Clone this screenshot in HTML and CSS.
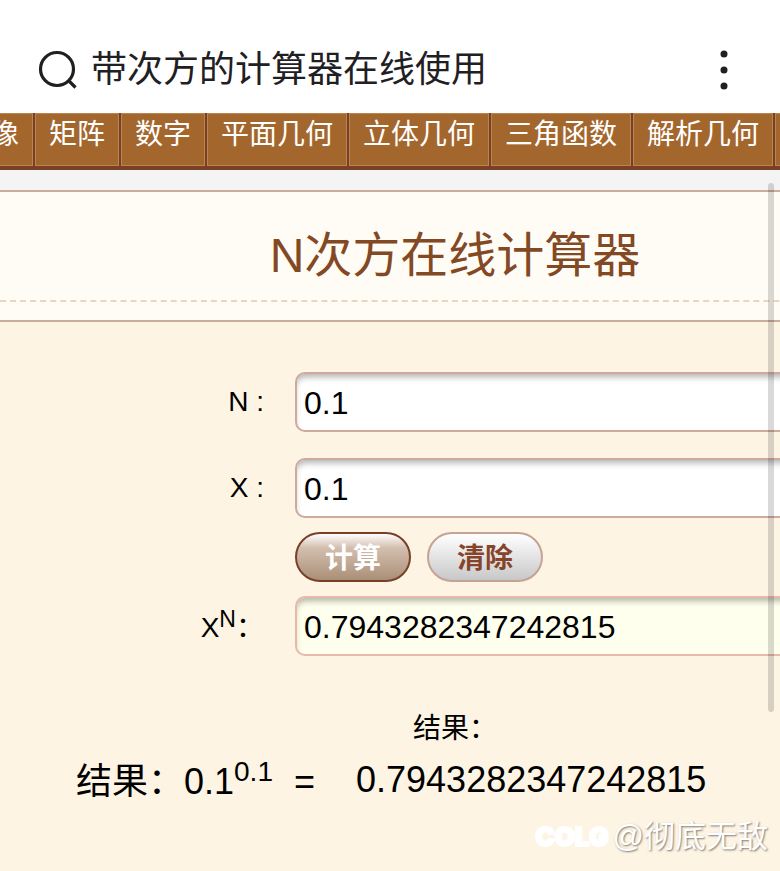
FILE: index.html
```html
<!DOCTYPE html>
<html lang="zh-CN">
<head>
    <meta charset="UTF-8">
    <meta name="viewport" content="width=device-width, initial-scale=1.0">
    <title>N次方在线计算器</title>
    <link rel="stylesheet" href="styles.css">
</head>
<body>
    <header class="search-bar">
        <svg class="search-icon" viewBox="0 0 40 40" fill="none" stroke="#1f2023" stroke-width="3.200">
            <circle cx="19" cy="19" r="16.5"/>
            <path d="M30 30l7.500 7.500"/>
        </svg>
        <span class="search-text">带次方的计算器在线使用</span>
        <button class="menu-button" type="button" aria-label="菜单">
            <svg viewBox="0 0 8 40" fill="#1f2023">
                <circle cx="4" cy="4" r="3.5"/>
                <circle cx="4" cy="20" r="3.5"/>
                <circle cx="4" cy="36" r="3.5"/>
            </svg>
        </button>
    </header>

    <nav class="nav">
        <a href="#">像</a>
        <a href="#">矩阵</a>
        <a href="#">数字</a>
        <a href="#">平面几何</a>
        <a href="#">立体几何</a>
        <a href="#">三角函数</a>
        <a href="#">解析几何</a>
        <a href="#" aria-label="更多"></a>
    </nav>

    <main class="page">
        <div class="title-box">
            <h1>N次方在线计算器</h1>
        </div>

        <form class="calc">
            <div class="row">
                <label for="n">N :</label>
                <input id="n" type="text" value="0.1">
            </div>
            <div class="row">
                <label for="x">X :</label>
                <input id="x" type="text" value="0.1">
            </div>
            <div class="buttons">
                <button class="btn btn-primary" type="button">计算</button>
                <button class="btn" type="reset">清除</button>
            </div>
            <div class="row">
                <label for="result">X<sup>N</sup>：</label>
                <input id="result" class="result" type="text" value="0.7943282347242815" readonly>
            </div>
        </form>

        <p class="result-title">结果：</p>
        <div class="result-line">
            <span>结果：0.1<sup>0.1</sup><span class="equals">=</span></span>
            <span>0.7943282347242815</span>
        </div>
    </main>

    <div class="scroll-thumb"></div>
    <div class="watermark"><span class="brand">COLG</span><span>@彻底无敌</span></div>
</body>
</html>
```

FILE: styles.css
```css
/* Base */
* {
    box-sizing: border-box;
}

body {
    margin: 0;
    min-height: 100vh;
    position: relative;
    display: flex;
    flex-direction: column;
    overflow: hidden;
    background-color: #f4f4f4;
    color: #000;
    font-family: "Liberation Sans", "Noto Sans CJK SC", sans-serif;
    font-size: 28px;
}

/* Search bar */
.search-bar {
    display: flex;
    align-items: center;
    height: 113px;
    padding: 26px 52px 0 38px;
    background-color: #fff;
    color: #1f2023;
}

.search-icon {
    width: 40px;
    height: 40px;
    margin-right: 13px;
}

.search-text {
    flex: 1;
    font-size: 36px;
    line-height: 40px;
}

.menu-button {
    width: 8px;
    height: 40px;
    padding: 0;
    border: none;
    background: none;
}

.menu-button svg {
    display: block;
}

/* Nav */
.nav {
    display: flex;
    gap: 2px;
    margin-left: -23px;
    background-color: #7a3f27;
    border-bottom: 4px solid #7a3f27;
}

.nav a {
    flex: none;
    height: 53px;
    min-width: 56px;
    padding: 0 13px;
    border: 1px solid #b98550;
    background-color: #a3672d;
    color: #fff;
    line-height: 42px;
    text-decoration: none;
}

/* The page is wider than the phone screen */
.page {
    flex: 1;
    width: calc(100% + 130px);
    margin-top: 20px;
    background-color: #fdf4e4;
}

.title-box {
    padding: 28px 0 18px;
    border: solid #cbab9c;
    border-width: 2px 0;
    background-color: #fffcf5;
}

.title-box h1 {
    margin: 0;
    padding-bottom: 8px;
    border-bottom: 2px dashed #ead5c3;
    color: #834924;
    font-size: 48px;
    font-weight: normal;
    line-height: 72px;
    text-align: center;
}

/* Form */
.calc {
    display: flex;
    flex-direction: column;
    padding-top: 50px;
}

.row {
    display: grid;
    grid-template-columns: 264px 1fr;
    column-gap: 31px;
    align-items: center;
}

.row + .row {
    margin-top: 26px;
}

.row label {
    text-align: right;
    line-height: 40px;
}

.row label sup {
    font-size: 23px;
    line-height: 32px;
}

.row input {
    height: 60px;
    padding: 2px 7px 0;
    border: 2px solid #cfa99c;
    border-radius: 10px;
    background-color: #fff;
    box-shadow: inset 0 5px 6px -2px rgba(0, 0, 0, 0.3);
    color: #000;
    font-family: inherit;
    font-size: 32px;
}

.row .result {
    border-color: #e8b8a8;
    background-color: #ffffee;
}

.buttons {
    display: flex;
    gap: 16px;
    margin: 14px 0 14px 295px;
}

.btn {
    width: 116px;
    height: 50px;
    padding: 0 0 2px;
    border: 2px solid #c5a293;
    border-radius: 25px;
    background: linear-gradient(#fff, #c8c8c8);
    color: #86442a;
    font-family: inherit;
    font-size: 28px;
    font-weight: bold;
}

.btn-primary {
    border-color: #7a3f27;
    background: linear-gradient(#fff, #d3bfaf 30%, #aa8f77);
    color: #fff;
}

/* Result */
.result-title {
    margin: 54px 0 0;
    line-height: 38px;
    text-align: center;
}

.result-line {
    display: flex;
    align-items: center;
    padding: 0 0 40px 76px;
    font-size: 36px;
    line-height: 60px;
}

.result-line sup {
    font-size: 28px;
    line-height: 48px;
}

.result-line .equals {
    margin: 0 41px 0 21px;
}

/* Overlays */
.scroll-thumb {
    position: absolute;
    top: 183px;
    right: 6px;
    bottom: 159px;
    width: 6px;
    border-radius: 3px;
    background-color: rgba(0, 0, 0, 0.15);
}

.watermark {
    position: absolute;
    right: 12px;
    bottom: 14px;
    display: flex;
    align-items: center;
    gap: 4px;
    color: #fff;
    font-size: 31px;
    line-height: 40px;
    text-shadow: 1px 1px 2px rgba(0, 0, 0, 0.5);
}

.watermark .brand {
    font-family: Inter, sans-serif;
    font-size: 26px;
    font-weight: 900;
    text-shadow: none;
    -webkit-text-stroke: 2px #fff;
}
```
